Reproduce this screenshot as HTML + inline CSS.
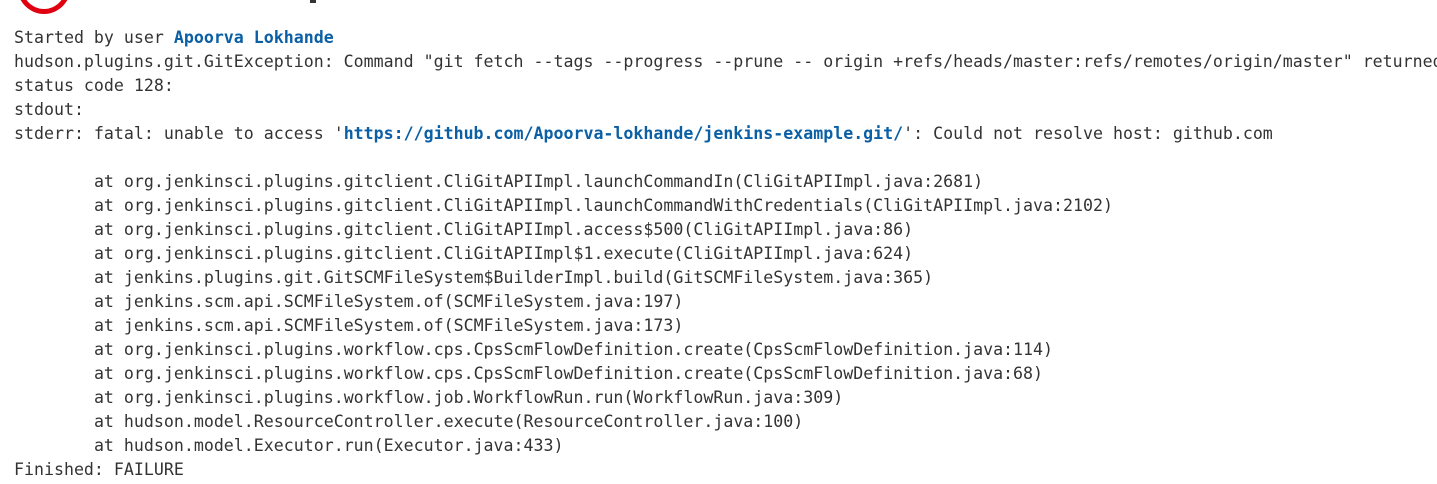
<!DOCTYPE html>
<html><head><meta charset="utf-8"><style>
html,body{margin:0;padding:0;background:#fff;width:1437px;height:484px;overflow:hidden;position:relative}
pre{position:absolute;left:14px;top:26px;margin:0;font-family:"DejaVu Sans Mono","Liberation Mono",monospace;font-size:16.6px;line-height:24px;color:#333;tab-size:8;white-space:pre}
b{color:#0b5fa5;font-weight:bold}
.ring{position:absolute;left:17px;top:-42px;width:44px;height:46px;border:5px solid #e0000f;border-radius:50%}
.g{position:absolute;left:310px;top:0;width:6px;height:3px;background:#333}
</style></head><body>
<div class="ring"></div><div class="g"></div>
<pre>Started by user <b>Apoorva Lokhande</b>
hudson.plugins.git.GitException: Command "git fetch --tags --progress --prune -- origin +refs/heads/master:refs/remotes/origin/master" returned
status code 128:
stdout: 
stderr: fatal: unable to access '<b>https://github.com/Apoorva-lokhande/jenkins-example.git/</b>': Could not resolve host: github.com

	at org.jenkinsci.plugins.gitclient.CliGitAPIImpl.launchCommandIn(CliGitAPIImpl.java:2681)
	at org.jenkinsci.plugins.gitclient.CliGitAPIImpl.launchCommandWithCredentials(CliGitAPIImpl.java:2102)
	at org.jenkinsci.plugins.gitclient.CliGitAPIImpl.access$500(CliGitAPIImpl.java:86)
	at org.jenkinsci.plugins.gitclient.CliGitAPIImpl$1.execute(CliGitAPIImpl.java:624)
	at jenkins.plugins.git.GitSCMFileSystem$BuilderImpl.build(GitSCMFileSystem.java:365)
	at jenkins.scm.api.SCMFileSystem.of(SCMFileSystem.java:197)
	at jenkins.scm.api.SCMFileSystem.of(SCMFileSystem.java:173)
	at org.jenkinsci.plugins.workflow.cps.CpsScmFlowDefinition.create(CpsScmFlowDefinition.java:114)
	at org.jenkinsci.plugins.workflow.cps.CpsScmFlowDefinition.create(CpsScmFlowDefinition.java:68)
	at org.jenkinsci.plugins.workflow.job.WorkflowRun.run(WorkflowRun.java:309)
	at hudson.model.ResourceController.execute(ResourceController.java:100)
	at hudson.model.Executor.run(Executor.java:433)
Finished: FAILURE</pre>
</body></html>
